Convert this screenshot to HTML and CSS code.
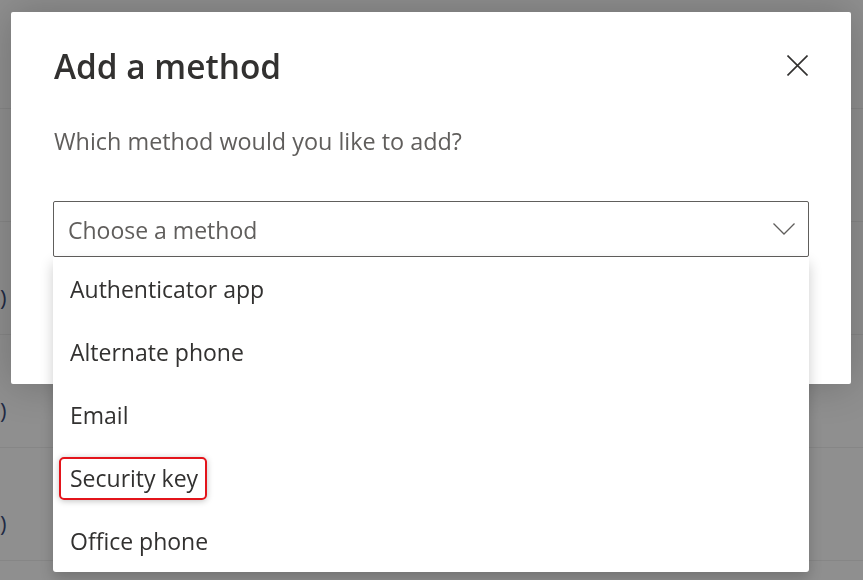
FILE: index.html
```html
<!DOCTYPE html>
<html>

<head>
    <meta charset='UTF-8'>
    <meta name='viewport' content='width=device-width, initial-scale=1.0'>
    <title>Add a method</title>
    <link rel="stylesheet" href="styles.css">
</head>

<body>
    <!-- page behind the dialog -->
    <div class="page">
        <div class="row"></div>
        <div class="row"><span class="row-text">)</span></div>
        <div class="row"><span class="row-text">)</span></div>
        <div class="row"><span class="row-text">)</span></div>
        <div class="row row-last"></div>
    </div>

    <!-- dialog -->
    <div class="modal">
        <div class="modal-head">
            <h2 class="modal-title">Add a method</h2>
            <button class="close-btn" aria-label="Close">
                <svg width="21" height="21" viewBox="0 0 21 21">
                    <path d="M0.5 0.5 L20.5 20.5 M20.5 0.5 L0.5 20.5" stroke="#323130" stroke-width="1.6" fill="none" />
                </svg>
            </button>
        </div>
        <p class="modal-text">Which method would you like to add?</p>
        <div class="select-wrap">
            <div class="select">
                <span class="select-text">Choose a method</span>
                <svg class="chevron" width="22" height="12" viewBox="0 0 22 12">
                    <path d="M0.5 0.5 L11 11 L21.5 0.5" stroke="#605e5c" stroke-width="1.3" fill="none" />
                </svg>
            </div>
            <ul class="options">
                <li class="option">Authenticator app</li>
                <li class="option">Alternate phone</li>
                <li class="option">Email</li>
                <li class="option"><span class="mark">Security key</span></li>
                <li class="option">Office phone</li>
            </ul>
        </div>
    </div>
</body>

</html>
```
FILE: styles.css
```css
* {
    box-sizing: border-box;
}

body {
    margin: 0;
    height: 580px;
    overflow: hidden;
    background-color: #8f8f8f;
    font-family: "Open Sans", "Noto Sans", sans-serif;
}

/* 背后的页面 */
.page {
    padding-top: 108px;
}

.row {
    height: 113px;
    border-top: 1px solid #868686;
    padding-top: 60px;
}

.row-last {
    height: 20px;
    padding: 0;
}

.row-text {
    display: block;
    font-size: 22px;
    line-height: 30px;
    color: #1f2a44;
}

/* 弹窗 */
.modal {
    position: fixed;
    left: 11px;
    top: 12px;
    width: 840px;
    height: 372px;
    background: #fff;
    border-radius: 2px;
    box-shadow: 0 0 40px rgba(0, 0, 0, 0.22);
    padding: 0 43px 0 42px;
}

.modal-head {
    display: flex;
    justify-content: space-between;
    align-items: flex-start;
    padding-top: 31px;
}

.modal-title {
    margin: 0 0 0 1px;
    font-size: 33.4px;
    font-weight: 600;
    line-height: 46px;
    color: #323130;
}

.close-btn {
    border: none;
    background: none;
    padding: 0;
    margin-top: 12px;
    width: 21px;
    height: 21px;
    cursor: pointer;
}

.close-btn svg {
    display: block;
}

.modal-text {
    margin: 37px 0 0 1px;
    font-size: 23.4px;
    line-height: 30px;
    color: #605e5c;
}

.select-wrap {
    position: relative;
    margin-top: 45px;
}

.select {
    height: 56px;
    width: 756px;
    border: 1px solid #605e5c;
    border-radius: 2px;
    display: flex;
    align-items: center;
    justify-content: space-between;
    padding: 0 13px 0 14px;
}

.select-text {
    font-size: 23px;
    color: #605e5c;
    padding-top: 2px;
}

.chevron {
    display: block;
}

/* 下拉菜单 */
.options {
    position: absolute;
    left: 0;
    top: 56px;
    width: 756px;
    margin: 0;
    padding: 0;
    list-style: none;
    background: #fff;
    border-radius: 0 0 3px 3px;
    box-shadow: 0 6px 14px rgba(0, 0, 0, 0.2);
}

.option {
    height: 63px;
    line-height: 63px;
    padding: 1px 0 0 17px;
    font-size: 23px;
    color: #323130;
    white-space: nowrap;
}

.mark {
    display: inline-block;
    line-height: 39px;
    margin-left: -11px;
    padding: 0 7px 0 9px;
    border: 2px solid #e3141b;
    border-radius: 5px;
    box-shadow: 0 1px 6px rgba(0, 0, 0, 0.25);
}
```
